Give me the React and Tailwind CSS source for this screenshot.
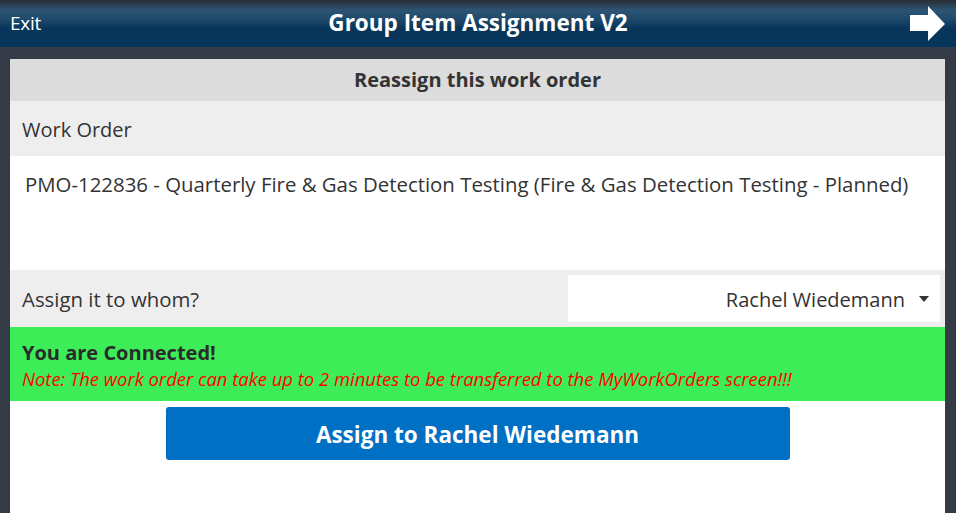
import { useState } from 'react';

const ArrowIcon = () => (
  <svg width="36" height="36" viewBox="0 0 36 36" className="block">
    <polygon points="0,9 18,9 18,0 35,18 18,35 18,25 0,25" fill="#ffffff" />
  </svg>
);

const App = () => {
  const [assignee] = useState('Rachel Wiedemann');

  return (
    <div
      className="w-[956px] h-[513px] overflow-hidden bg-[#343a46] flex flex-col text-[#333333]"
      style={{ fontFamily: '"Open Sans", "Noto Sans", sans-serif' }}
    >
      <header className="h-[47px] shrink-0 flex items-center justify-between px-[10px] bg-[linear-gradient(to_bottom,#292d33_0%,#2d5474_22%,#1f4a6b_40%,#08355a_60%,#06345a_100%)]">
        <span className="text-white text-[19px] w-[60px] tracking-[-0.3px]">Exit</span>
        <h1 className="text-white font-bold text-[22.5px] leading-none">Group Item Assignment V2</h1>
        <div className="w-[60px] flex justify-end">
          <ArrowIcon />
        </div>
      </header>

      <div className="flex-1 pt-[12px] pl-[10px] pr-[11px]">
        <div className="h-full bg-white flex flex-col">
          <div className="h-[42px] bg-[#dcdcdc] flex items-center justify-center font-bold text-[20px] leading-none text-[#333333]">
            Reassign this work order
          </div>
          <div className="h-[55px] bg-[#eeeeee] flex items-center px-[12px] pt-[2px] text-[20px] leading-none">
            Work Order
          </div>
          <div className="h-[114px] bg-white px-[15px] pt-[14px] text-[20.4px] leading-[28px]">
            PMO-122836 - Quarterly Fire &amp; Gas Detection Testing (Fire &amp; Gas Detection Testing - Planned)
          </div>
          <div className="h-[57px] bg-[#eeeeee] flex items-center justify-between pl-[12px] pr-[5px] text-[20.4px] leading-none">
            <span className="pt-[2px]">Assign it to whom?</span>
            <div className="w-[372px] h-[47px] bg-white flex items-center justify-end gap-[14px] pr-[11px]">
              <span className="text-[20px] pt-[3px]">{assignee}</span>
              <svg width="10" height="6" viewBox="0 0 10 6">
                <polygon points="0,0 10,0 5,6" fill="#333333" />
              </svg>
            </div>
          </div>
          <div className="h-[74px] bg-[#3ded58] flex flex-col justify-center px-[12px] pt-[1px]">
            <span className="font-bold text-[20px] leading-[27px] text-[#2b2b2b]">You are Connected!</span>
            <span className="italic text-[18.45px] leading-[25px] text-[#ff0000]">
              Note: The work order can take up to 2 minutes to be transferred to the MyWorkOrders screen!!!
            </span>
          </div>
          <div className="flex justify-center pt-[6px]">
            <button className="w-[624px] h-[53px] bg-[#0070c4] rounded-[3px] text-white font-bold text-[22.5px] leading-none flex items-center justify-center pt-[3px]">
              Assign to {assignee}
            </button>
          </div>
        </div>
      </div>
    </div>
  );
};

export default App;
